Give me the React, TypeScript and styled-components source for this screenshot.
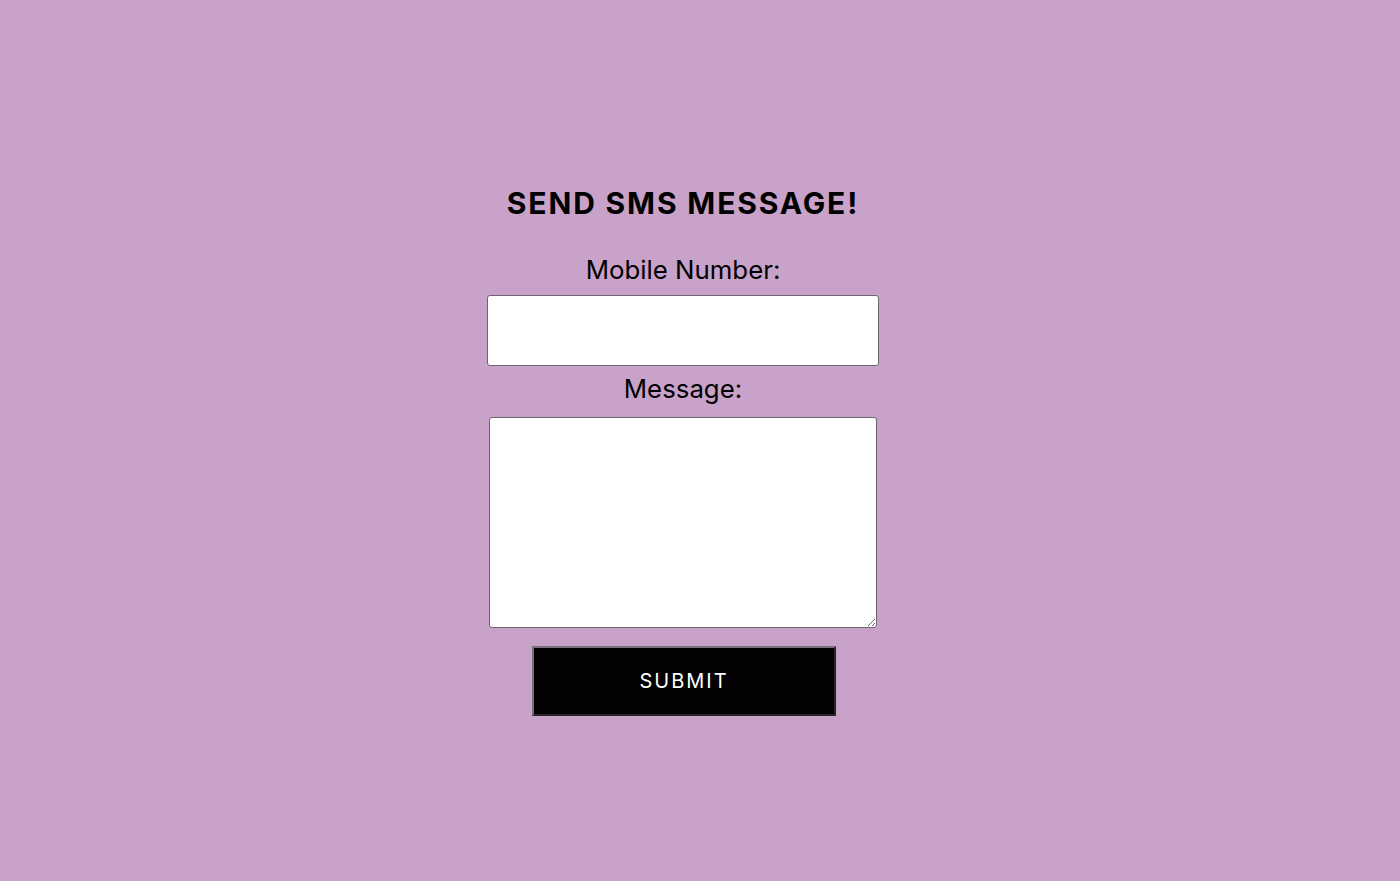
import React from "react";
import styled, { createGlobalStyle } from "styled-components";

const Global = createGlobalStyle`
  html, body { margin: 0; padding: 0; background: #c8a2c8; }
  body { font-family: Inter, "Liberation Sans", sans-serif; color: #000; }
`;

const Page = styled.div`
  min-height: 881px;
  display: flex;
  justify-content: flex-start;
`;

const Form = styled.form`
  width: 392px;
  margin-left: 487px;
  padding-top: 183px;
  display: flex;
  flex-direction: column;
  align-items: center;
`;

const Title = styled.h1`
  margin: 0;
  font-size: 30px;
  line-height: 40px;
  font-weight: 700;
  letter-spacing: 1.85px;
  white-space: nowrap;
`;

const Label = styled.label<{ $top: number }>`
  margin-top: ${(p) => p.$top}px;
  font-size: 25.8px;
  line-height: 32px;
  font-weight: 400;
  margin-bottom: 9px;
`;

const Input = styled.input`
  box-sizing: border-box;
  width: 392px;
  height: 71px;
  border: 1px solid #6e6570;
  border-radius: 3px;
  background: #fff;
  outline: none;
`;

const TextArea = styled.textarea`
  box-sizing: border-box;
  width: 388px;
  height: 211px;
  border: 1px solid #6e6570;
  border-radius: 3px;
  background: #fff;
  outline: none;
  margin: 3px 0 0 0;
`;

const Button = styled.button`
  box-sizing: border-box;
  margin: 18px 0 0 2px;
  width: 304px;
  height: 70px;
  background: #030104;
  color: #fff;
  border: 2px outset #7a6f7c;
  font-family: Inter, "Liberation Sans", sans-serif;
  font-size: 20px;
  letter-spacing: 2px;
  cursor: pointer;
`;

export default function App() {
  return (
    <>
      <Global />
      <Page>
        <Form onSubmit={(e) => e.preventDefault()}>
          <Title>SEND SMS MESSAGE!</Title>
          <Label $top={31} htmlFor="mobile">Mobile Number:</Label>
          <Input id="mobile" type="text" />
          <Label $top={7} htmlFor="msg">Message:</Label>
          <TextArea id="msg" />
          <Button type="submit">SUBMIT</Button>
        </Form>
      </Page>
    </>
  );
}
